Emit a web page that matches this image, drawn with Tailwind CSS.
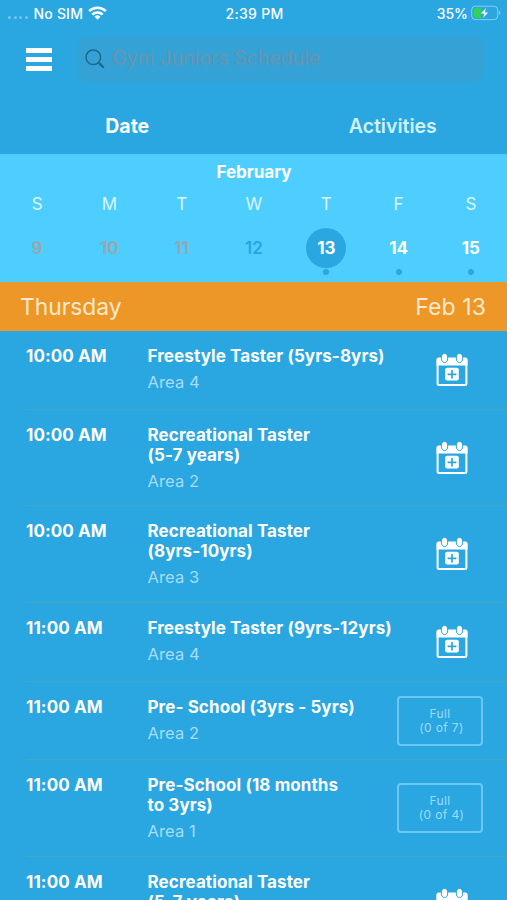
<!DOCTYPE html>
<html lang="en">
  <head>
    <meta charset="UTF-8" />
    <meta name="viewport" content="width=device-width, initial-scale=1.0" />
    <title>Gym Juniors Schedule</title>
    <script src="https://cdn.jsdelivr.net/npm/@tailwindcss/browser@4"></script>
  </head>
  <body class="bg-[#2aa7e1] font-['Inter','Liberation_Sans',sans-serif] text-white h-[900px] overflow-hidden">
    <!-- Icons -->
    <svg class="hidden">
      <symbol id="calendar-add" viewBox="0 0 32 34">
        <rect x="1.6" y="6" width="28.8" height="26" rx="1.5" fill="none" stroke="#fff" stroke-width="2" />
        <path d="M.5 12.500V6.500a2 2 0 0 1 2-2h27a2 2 0 0 1 2 2v6z" fill="#fff" />
        <g fill="#fff" stroke="#2aa7e1" stroke-width="1">
          <ellipse cx="8.500" cy="5" rx="3.200" ry="4.500" />
          <ellipse cx="23.500" cy="5" rx="3.200" ry="4.500" />
        </g>
        <rect x="9.200" y="14.800" width="13.600" height="12.800" rx="2" fill="#fff" />
        <path d="M16 17v8.600M11.600 21.300h8.800" stroke="#2aa7e1" stroke-width="1.700" />
      </symbol>
    </svg>

    <!-- Status bar -->
    <div class="h-[26px] px-2 flex items-center justify-between text-[14px] font-medium">
      <div class="w-[180px] flex items-center">
        <div class="flex gap-[2.5px] mr-[6px] mt-2">
          <span class="size-[3px] rounded-full bg-white/35"></span>
          <span class="size-[3px] rounded-full bg-white/35"></span>
          <span class="size-[3px] rounded-full bg-white/35"></span>
          <span class="size-[3px] rounded-full bg-white/35"></span>
        </div>
        <span class="tracking-[0.2px]">No SIM</span>
        <svg class="ml-[5px] w-[19px] h-[14px]" viewBox="0 0 19 14" fill="none" stroke="#fff" stroke-width="2.6">
          <path d="M1.2 5.1a12 12 0 0 1 16.6 0" />
          <path d="M4.3 8.6a7.5 7.5 0 0 1 10.4 0" />
          <path d="M9.5 13.8 6.5 10.8a4.3 4.3 0 0 1 6 0z" fill="#fff" stroke="none" />
        </svg>
      </div>
      <span class="tracking-[0.3px]">2:39 PM</span>
      <div class="w-[180px] flex items-center justify-end -mr-[2px]">
        <span>35%</span>
        <svg class="ml-[3px] w-[30px] h-[16px]" viewBox="0 0 30 16">
          <rect x=".7" y="1.2" width="26" height="13.4" rx="3.6" fill="none" stroke="#fff" stroke-opacity=".45" />
          <path d="M28 5.6c1.8.7 1.8 3.9 0 4.6z" fill="#fff" fill-opacity=".45" />
          <path d="M4.5 2.9H10v10H4.5a2 2 0 0 1-2-2v-6a2 2 0 0 1 2-2z" fill="#30d158" />
          <path d="M15.3 2.6 9.4 8.700h3.700l-1.300 4.900 5.800-6.400h-3.500z" fill="#fff" stroke="#2aa7e1" stroke-width=".5" />
        </svg>
      </div>
    </div>

    <!-- Search -->
    <div class="h-[70px] pt-[10px] pl-[26px] pr-[24px] flex items-start">
      <button class="mt-[12px] w-[26px] flex flex-col gap-1" aria-label="Menu">
        <span class="h-[5px] bg-white"></span>
        <span class="h-[5px] bg-white"></span>
        <span class="h-[5px] bg-white"></span>
      </button>
      <div class="ml-[25px] flex-1 h-[46px] rounded-[10px] bg-[#35a2d6] flex items-center">
        <svg class="ml-[7px] size-[22px]" viewBox="0 0 22 22" fill="none" stroke="#21678b">
          <circle cx="9.300" cy="9.300" r="7.300" stroke-width="1.500" />
          <path d="m14.600 14.600 5.200 5.200" stroke-width="2.200" />
        </svg>
        <span class="ml-[6px] text-[19.5px] text-[#6b93ab]">Gym Juniors Schedule</span>
      </div>
    </div>

    <!-- Tabs -->
    <div class="h-[58px] pt-[3px] grid grid-cols-2 items-center text-center text-[19.5px]">
      <span class="pl-px font-bold">Date</span>
      <span class="pl-[25px] font-semibold text-[#d0f1fd]">Activities</span>
    </div>

    <!-- Week -->
    <div class="h-[128px] bg-[#4eceff] pl-px">
      <div class="h-[37px] pt-px flex items-center justify-center text-[17px] font-bold">February</div>
      <div class="grid grid-cols-7 h-[28px] items-center text-center text-[17px] text-[#dcf6ff]">
        <span>S</span><span>M</span><span>T</span><span>W</span><span>T</span><span>F</span><span>S</span>
      </div>
      <div class="grid grid-cols-7 pt-[9px] text-center text-[17px] font-bold leading-[40px]">
        <span class="text-[#93a9b1]">9</span>
        <span class="text-[#93a9b1]">10</span>
        <span class="text-[#93a9b1]">11</span>
        <span class="font-semibold text-[#28a5df]">12</span>
        <div class="flex flex-col items-center">
          <span class="size-[40px] rounded-full bg-[#2aa7e1]">13</span>
          <span class="mt-px size-[6px] rounded-full bg-[#2aa7e1]"></span>
        </div>
        <div class="flex flex-col items-center">
          <span class="h-[40px]">14</span>
          <span class="mt-px size-[6px] rounded-full bg-[#2aa7e1]"></span>
        </div>
        <div class="flex flex-col items-center">
          <span class="h-[40px]">15</span>
          <span class="mt-px size-[6px] rounded-full bg-[#2aa7e1]"></span>
        </div>
      </div>
    </div>

    <!-- Day heading -->
    <div class="h-[49px] pl-[20px] pr-[21px] pt-px flex items-center justify-between bg-[#ec9728] text-[#ffe9cb]">
      <span class="text-[22.8px]">Thursday</span>
      <span class="text-[23px] tracking-[0.1px]">Feb 13</span>
    </div>

    <!-- Classes -->
    <ul class="ml-[26px] text-[17px] leading-[20px] font-bold tracking-[0.1px]">
      <li class="h-[79px] flex border-b border-[#4ba6b9] pr-[24px]">
        <span class="w-[121.5px] pt-[15px]">10:00 AM</span>
        <div class="flex-1 pt-[15px] whitespace-nowrap">
          <p>Freestyle Taster (5yrs-8yrs)</p>
          <p class="mt-[6px] font-normal text-[16.5px] text-[#a9dcf3]">Area 4</p>
        </div>
        <svg class="self-center w-[32px] h-[34px] mr-[15px]"><use href="#calendar-add" /></svg>
      </li>
      <li class="h-[96px] flex border-b border-[#4ba6b9] pr-[24px]">
        <span class="w-[121.5px] pt-[15px]">10:00 AM</span>
        <div class="flex-1 pt-[15px] whitespace-nowrap">
          <p>Recreational Taster<br />(5-7 years)</p>
          <p class="mt-[6px] font-normal text-[16.5px] text-[#a9dcf3]">Area 2</p>
        </div>
        <svg class="self-center w-[32px] h-[34px] mr-[15px]"><use href="#calendar-add" /></svg>
      </li>
      <li class="h-[97px] flex border-b border-[#4ba6b9] pr-[24px]">
        <span class="w-[121.5px] pt-[15px]">10:00 AM</span>
        <div class="flex-1 pt-[15px] whitespace-nowrap">
          <p>Recreational Taster<br />(8yrs-10yrs)</p>
          <p class="mt-[6px] font-normal text-[16.5px] text-[#a9dcf3]">Area 3</p>
        </div>
        <svg class="self-center w-[32px] h-[34px] mr-[15px]"><use href="#calendar-add" /></svg>
      </li>
      <li class="h-[79px] flex border-b border-[#4ba6b9] pr-[24px]">
        <span class="w-[121.5px] pt-[15px]">11:00 AM</span>
        <div class="flex-1 pt-[15px] whitespace-nowrap">
          <p>Freestyle Taster (9yrs-12yrs)</p>
          <p class="mt-[6px] font-normal text-[16.5px] text-[#a9dcf3]">Area 4</p>
        </div>
        <svg class="self-center w-[32px] h-[34px] mr-[15px]"><use href="#calendar-add" /></svg>
      </li>
      <li class="h-[78px] flex border-b border-[#4ba6b9] pr-[24px]">
        <span class="w-[121.5px] pt-[15px]">11:00 AM</span>
        <div class="flex-1 pt-[15px] whitespace-nowrap">
          <p>Pre- School (3yrs - 5yrs)</p>
          <p class="mt-[6px] font-normal text-[16.5px] text-[#a9dcf3]">Area 2</p>
        </div>
        <div class="self-center w-[86px] h-[50px] rounded-[4px] border-2 border-[#6cc8f2] flex flex-col justify-center text-center text-[12px] leading-[14px] tracking-[0.4px] font-normal text-[#9fdcf8]">
          <span>Full</span>
          <span class="pl-[3px]">(0 of 7)</span>
        </div>
      </li>
      <li class="h-[97px] flex border-b border-[#4ba6b9] pr-[24px]">
        <span class="w-[121.5px] pt-[15px]">11:00 AM</span>
        <div class="flex-1 pt-[15px] whitespace-nowrap">
          <p>Pre-School (18 months<br />to 3yrs)</p>
          <p class="mt-[6px] font-normal text-[16.5px] text-[#a9dcf3]">Area 1</p>
        </div>
        <div class="self-center w-[86px] h-[50px] rounded-[4px] border-2 border-[#6cc8f2] flex flex-col justify-center text-center text-[12px] leading-[14px] tracking-[0.4px] font-normal text-[#9fdcf8]">
          <span>Full</span>
          <span class="pl-[3px]">(0 of 4)</span>
        </div>
      </li>
      <li class="h-[97px] flex border-b border-[#4ba6b9] pr-[24px]">
        <span class="w-[121.5px] pt-[15px]">11:00 AM</span>
        <div class="flex-1 pt-[15px] whitespace-nowrap">
          <p>Recreational Taster<br />(5-7 years)</p>
          <p class="mt-[6px] font-normal text-[16.5px] text-[#a9dcf3]">Area 2</p>
        </div>
        <svg class="self-center w-[32px] h-[34px] mr-[15px]"><use href="#calendar-add" /></svg>
      </li>
    </ul>
  </body>
</html>
